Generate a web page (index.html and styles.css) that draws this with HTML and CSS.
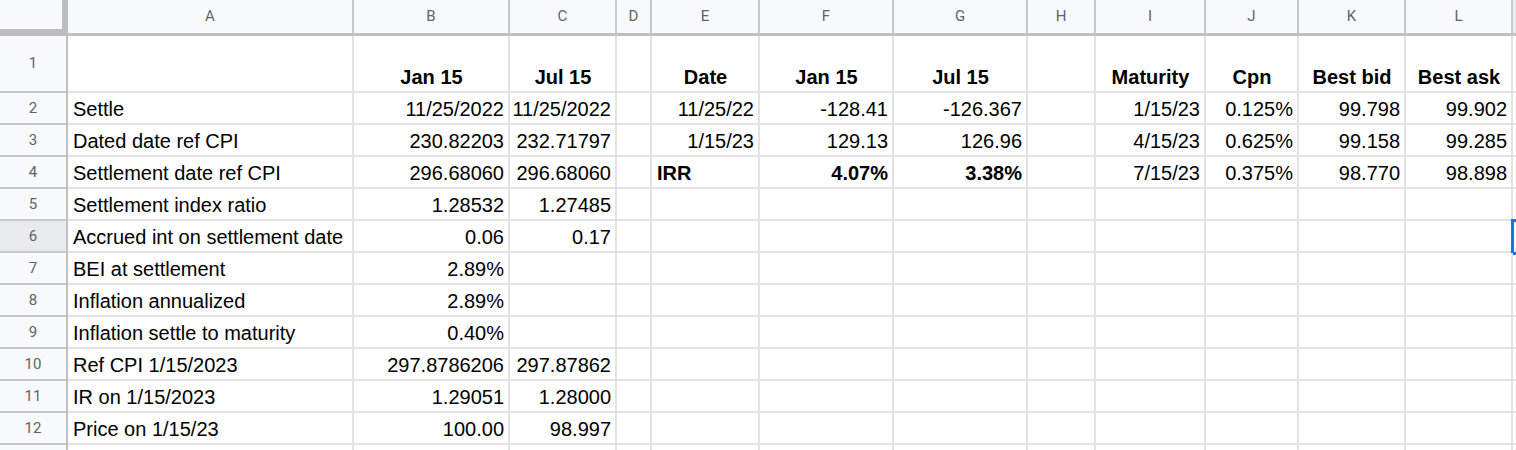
FILE: index.html
```html
<!DOCTYPE html>
<html>
<head>
<meta charset="utf-8">
<title>Sheet</title>
<link rel="stylesheet" href="styles.css">
</head>
<body>
<div class="sheet">
  <div class="row head">
    <div class="c corner"></div><div class="c">A</div><div class="c">B</div><div class="c">C</div><div class="c">D</div><div class="c">E</div><div class="c">F</div><div class="c">G</div><div class="c">H</div><div class="c">I</div><div class="c">J</div><div class="c">K</div><div class="c">L</div><div class="c sel-h"></div>
  </div>
  <div class="row r1">
    <div class="c rh">1</div><div class="c"></div><div class="c ctr b">Jan 15</div><div class="c ctr b">Jul 15</div><div class="c"></div><div class="c ctr b">Date</div><div class="c ctr b">Jan 15</div><div class="c ctr b">Jul 15</div><div class="c"></div><div class="c ctr b">Maturity</div><div class="c ctr b">Cpn</div><div class="c ctr b">Best bid</div><div class="c ctr b">Best ask</div><div class="c"></div>
  </div>
  <div class="row">
    <div class="c rh">2</div><div class="c">Settle</div><div class="c n">11/25/2022</div><div class="c n">11/25/2022</div><div class="c"></div><div class="c n">11/25/22</div><div class="c n">-128.41</div><div class="c n">-126.367</div><div class="c"></div><div class="c n">1/15/23</div><div class="c n">0.125%</div><div class="c n">99.798</div><div class="c n">99.902</div><div class="c"></div>
  </div>
  <div class="row">
    <div class="c rh">3</div><div class="c">Dated date ref CPI</div><div class="c n">230.82203</div><div class="c n">232.71797</div><div class="c"></div><div class="c n">1/15/23</div><div class="c n">129.13</div><div class="c n">126.96</div><div class="c"></div><div class="c n">4/15/23</div><div class="c n">0.625%</div><div class="c n">99.158</div><div class="c n">99.285</div><div class="c"></div>
  </div>
  <div class="row">
    <div class="c rh">4</div><div class="c">Settlement date ref CPI</div><div class="c n">296.68060</div><div class="c n">296.68060</div><div class="c"></div><div class="c b">IRR</div><div class="c n b">4.07%</div><div class="c n b">3.38%</div><div class="c"></div><div class="c n">7/15/23</div><div class="c n">0.375%</div><div class="c n">98.770</div><div class="c n">98.898</div><div class="c"></div>
  </div>
  <div class="row">
    <div class="c rh">5</div><div class="c">Settlement index ratio</div><div class="c n">1.28532</div><div class="c n">1.27485</div><div class="c"></div><div class="c"></div><div class="c"></div><div class="c"></div><div class="c"></div><div class="c"></div><div class="c"></div><div class="c"></div><div class="c"></div><div class="c"></div>
  </div>
  <div class="row">
    <div class="c rh sel-h">6</div><div class="c">Accrued int on settlement date</div><div class="c n">0.06</div><div class="c n">0.17</div><div class="c"></div><div class="c"></div><div class="c"></div><div class="c"></div><div class="c"></div><div class="c"></div><div class="c"></div><div class="c"></div><div class="c"></div><div class="c sel"></div>
  </div>
  <div class="row">
    <div class="c rh">7</div><div class="c">BEI at settlement</div><div class="c n">2.89%</div><div class="c"></div><div class="c"></div><div class="c"></div><div class="c"></div><div class="c"></div><div class="c"></div><div class="c"></div><div class="c"></div><div class="c"></div><div class="c"></div><div class="c"></div>
  </div>
  <div class="row">
    <div class="c rh">8</div><div class="c">Inflation annualized</div><div class="c n">2.89%</div><div class="c"></div><div class="c"></div><div class="c"></div><div class="c"></div><div class="c"></div><div class="c"></div><div class="c"></div><div class="c"></div><div class="c"></div><div class="c"></div><div class="c"></div>
  </div>
  <div class="row">
    <div class="c rh">9</div><div class="c">Inflation settle to maturity</div><div class="c n">0.40%</div><div class="c"></div><div class="c"></div><div class="c"></div><div class="c"></div><div class="c"></div><div class="c"></div><div class="c"></div><div class="c"></div><div class="c"></div><div class="c"></div><div class="c"></div>
  </div>
  <div class="row">
    <div class="c rh">10</div><div class="c">Ref CPI 1/15/2023</div><div class="c n">297.8786206</div><div class="c n">297.87862</div><div class="c"></div><div class="c"></div><div class="c"></div><div class="c"></div><div class="c"></div><div class="c"></div><div class="c"></div><div class="c"></div><div class="c"></div><div class="c"></div>
  </div>
  <div class="row">
    <div class="c rh">11</div><div class="c">IR on 1/15/2023</div><div class="c n">1.29051</div><div class="c n">1.28000</div><div class="c"></div><div class="c"></div><div class="c"></div><div class="c"></div><div class="c"></div><div class="c"></div><div class="c"></div><div class="c"></div><div class="c"></div><div class="c"></div>
  </div>
  <div class="row">
    <div class="c rh">12</div><div class="c">Price on 1/15/23</div><div class="c n">100.00</div><div class="c n">98.997</div><div class="c"></div><div class="c"></div><div class="c"></div><div class="c"></div><div class="c"></div><div class="c"></div><div class="c"></div><div class="c"></div><div class="c"></div><div class="c"></div>
  </div>
  <div class="row">
    <div class="c rh"></div><div class="c"></div><div class="c"></div><div class="c"></div><div class="c"></div><div class="c"></div><div class="c"></div><div class="c"></div><div class="c"></div><div class="c"></div><div class="c"></div><div class="c"></div><div class="c"></div><div class="c"></div>
  </div>
</div>
</body>
</html>
```

FILE: styles.css
```css
* { box-sizing: border-box; margin: 0; padding: 0; }
html, body { width: 1516px; height: 450px; overflow: hidden; background: #fff; }
body { font-family: "Liberation Sans", Arial, sans-serif; font-size: 20px; color: #000; }

.sheet { display: flex; flex-direction: column; width: 1616px; }

.row {
  display: grid;
  grid-template-columns: 68px 286px 156px 107px 35px 108px 134px 134px 68px 110px 93px 107px 107px 100px;
  height: 32px;
  flex: none;
}
.row.r1 { height: 57px; }
.row.head { height: 36px; }

.c {
  border-right: 2px solid #e2e2e2;
  border-bottom: 2px solid #e2e2e2;
  display: flex;
  align-items: flex-end;
  padding: 0 4px 2px 5px;
  line-height: 23px;
  white-space: nowrap;
  overflow: hidden;
}
.n { justify-content: flex-end; }
.ctr { justify-content: center; }
.b { font-weight: bold; }

.rh {
  background: #f8f9fa;
  border-right: 2px solid #c0c0c0;
  border-bottom: 2px solid #c7c7c7;
  justify-content: center;
  align-items: center;
  font-family: Roboto, "Liberation Sans", sans-serif;
  font-size: 15px;
  color: #5f6368;
  padding: 0;
}

.head .c {
  background: #f8f9fa;
  border-right: 2px solid #c7c7c7;
  border-bottom: 3px solid #c0c0c0;
  align-items: center;
  justify-content: center;
  font-family: Roboto, "Liberation Sans", sans-serif;
  font-size: 15px;
  color: #5f6368;
  padding: 0;
}
.head .corner {
  border-right: 6px solid #bdbdbd;
  border-bottom: 7px solid #bdbdbd;
}

.head .sel-h, .rh.sel-h { background: #e8eaed; }
.sel { overflow: visible; outline: 3px solid #1a73e8; outline-offset: -1px; }
```
